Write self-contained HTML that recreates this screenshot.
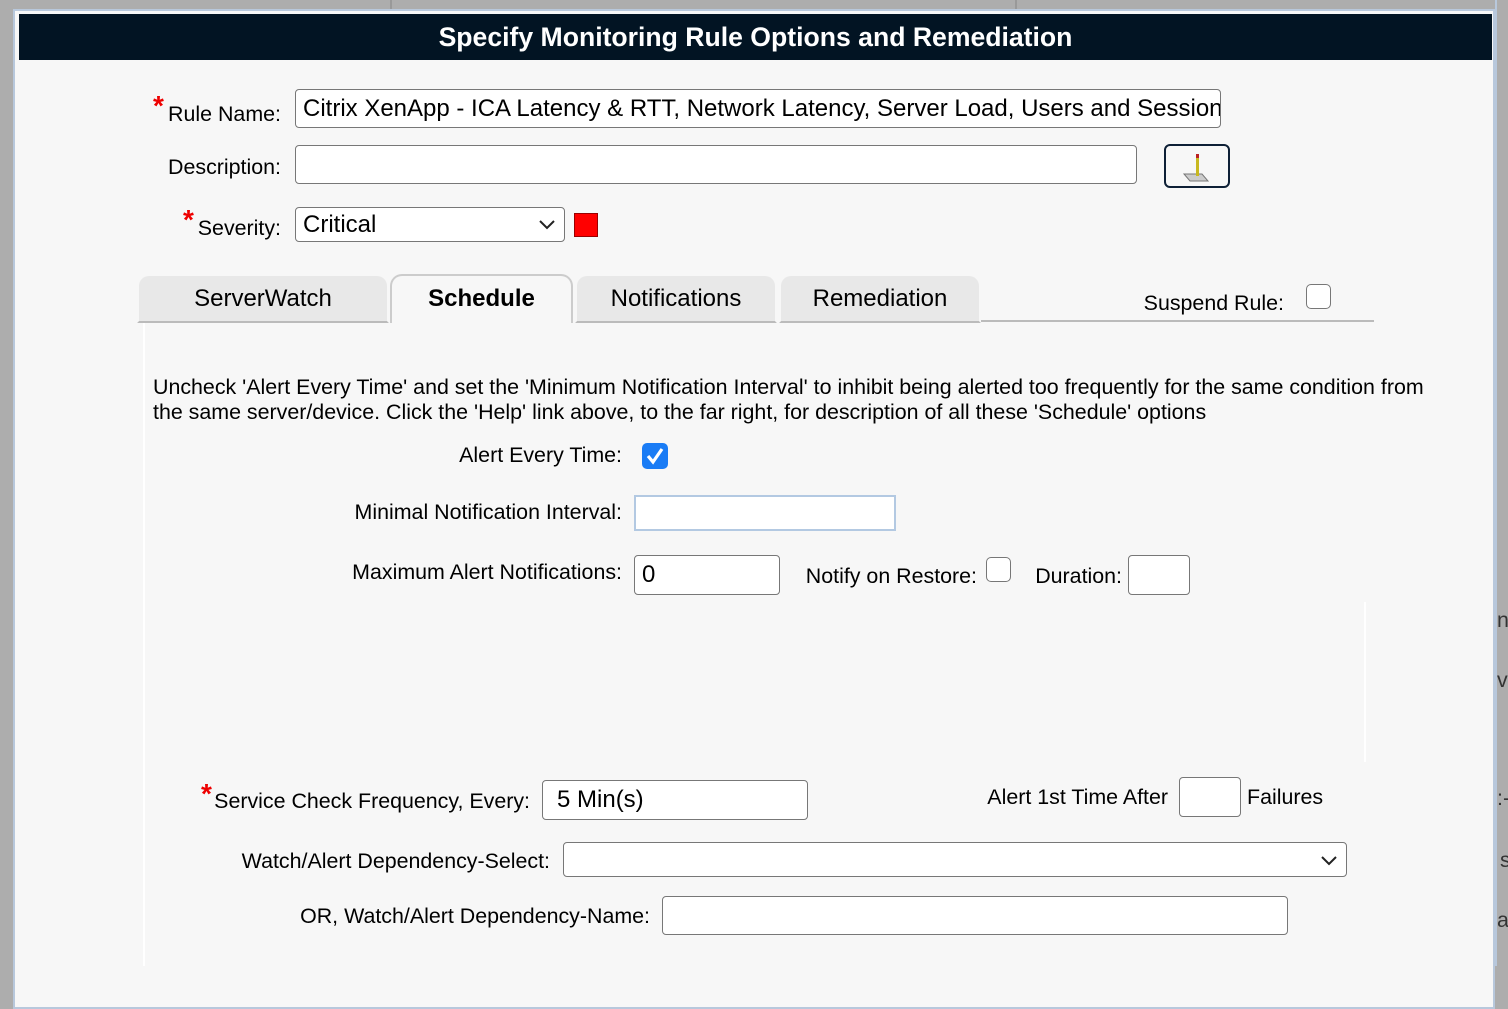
<!DOCTYPE html>
<html><head><meta charset="utf-8"><style>
*{box-sizing:border-box;margin:0;padding:0}
body{width:1508px;height:966px;background:#adadad;font-family:"Liberation Sans",Arial,sans-serif;color:#000;position:relative;overflow:hidden}
.a{position:absolute}
#dlg{left:13px;top:9px;width:1482px;height:1000px;background:#f7f7f7;border:2px solid #b8c8dc}
#hdr{left:19px;top:14px;width:1473px;height:46px;background:#021423;color:#fff;font-weight:bold;font-size:26.6px;text-align:center;line-height:46px}
.lbl{font-size:21.4px;white-space:nowrap}
.r{text-align:right}
.req{color:#e00;font-size:28px;font-weight:bold;position:absolute;line-height:1}
.in{background:#fff;border:1.5px solid #777;border-radius:4px;font-size:24px;padding-left:7px;white-space:nowrap;overflow:hidden}
.tab{top:274px;height:49px;background:#e8e8e8;border:2px solid #f7f7f7;border-bottom:2px solid #bbb;border-radius:12px 12px 0 0;font-size:24px;text-align:center;line-height:46px}
.cb{width:25px;height:25px;border:1.5px solid #777;border-radius:5px;background:#fff}
</style></head><body>
<div class="a" style="left:390px;top:0;width:2px;height:9px;background:#999"></div>
<div class="a" style="left:1015px;top:0;width:2px;height:9px;background:#999"></div>
<div id="dlg" class="a"></div>
<div id="hdr" class="a">Specify Monitoring Rule Options and Remediation</div>

<span class="req" style="left:153px;top:92px">*</span>
<div class="a lbl r" style="left:100px;width:181px;top:102px">Rule Name:</div>
<div class="a in" style="left:295px;top:89px;width:926px;height:39px;line-height:37px">Citrix XenApp - ICA Latency &amp; RTT, Network Latency, Server Load, Users and Sessions</div>

<div class="a lbl r" style="left:100px;width:181px;top:155px">Description:</div>
<div class="a in" style="left:295px;top:145px;width:842px;height:39px"></div>
<div class="a" style="left:1164px;top:144px;width:66px;height:44px;border:2px solid #0e2036;border-radius:6px;background:#f7f7f7">
<svg width="62" height="40" viewBox="0 0 62 40"><polygon points="18,28 36,28 42,35 24,35" fill="#ccc" stroke="#777"/><rect x="30" y="8" width="3" height="22" fill="#c8b820"/><rect x="30" y="8" width="3" height="4" fill="#b22"/></svg></div>

<span class="req" style="left:183px;top:206px">*</span>
<div class="a lbl r" style="left:100px;width:181px;top:216px">Severity:</div>
<div class="a in" style="left:295px;top:207px;width:270px;height:35px;line-height:33px">Critical
<svg class="a" style="right:8px;top:9px" width="18" height="14"><path d="M2 4 L9 11 L16 4" fill="none" stroke="#222" stroke-width="2"/></svg></div>
<div class="a" style="left:574px;top:213px;width:24px;height:24px;background:#f00;border:1.5px solid #900"></div>

<div class="a tab" style="left:137px;width:252px">ServerWatch</div>
<div class="a tab" style="left:390px;width:183px;background:#f7f7f7;border:2px solid #ccc;border-bottom:none;font-weight:bold">Schedule</div>
<div class="a tab" style="left:575px;width:202px">Notifications</div>
<div class="a tab" style="left:779px;width:202px">Remediation</div>
<div class="a" style="left:981px;top:320px;width:393px;height:2px;background:#bbb"></div>
<div class="a lbl r" style="left:1100px;width:184px;top:291px">Suspend Rule:</div>
<div class="a cb" style="left:1306px;top:284px"></div>
<div class="a" style="left:143px;top:323px;width:2px;height:643px;background:#fff"></div>
<div class="a" style="left:1364px;top:602px;width:2px;height:160px;background:#fff"></div>

<div class="a lbl" style="left:153px;top:375px;line-height:25px">Uncheck 'Alert Every Time' and set the 'Minimum Notification Interval' to inhibit being alerted too frequently for the same condition from<br>the same server/device. Click the 'Help' link above, to the far right, for description of all these 'Schedule' options</div>

<div class="a lbl r" style="left:300px;width:322px;top:443px">Alert Every Time:</div>
<div class="a" style="left:642px;top:443px;width:26px;height:26px;background:#1a7cf5;border-radius:5px"><svg width="26" height="26"><path d="M6 13 L11 19 L20 6" fill="none" stroke="#fff" stroke-width="3.2"/></svg></div>

<div class="a lbl r" style="left:300px;width:322px;top:500px">Minimal Notification Interval:</div>
<div class="a" style="left:634px;top:495px;width:262px;height:36px;background:#fff;border:2px solid #b3c9e2"></div>

<div class="a lbl r" style="left:300px;width:322px;top:560px">Maximum Alert Notifications:</div>
<div class="a in" style="left:634px;top:555px;width:146px;height:40px;line-height:38px">0</div>
<div class="a lbl r" style="left:760px;width:217px;top:564px">Notify on Restore:</div>
<div class="a cb" style="left:986px;top:557px"></div>
<div class="a lbl r" style="left:1000px;width:122px;top:564px">Duration:</div>
<div class="a in" style="left:1128px;top:555px;width:62px;height:40px"></div>

<span class="req" style="left:201px;top:780px">*</span>
<div class="a lbl r" style="left:150px;width:380px;top:789px">Service Check Frequency, Every:</div>
<div class="a in" style="left:542px;top:780px;width:266px;height:40px;line-height:38px;padding-left:14px">5 Min(s)</div>
<div class="a lbl r" style="left:900px;width:268px;top:785px">Alert 1st Time After</div>
<div class="a in" style="left:1179px;top:777px;width:62px;height:40px"></div>
<div class="a lbl" style="left:1247px;top:785px">Failures</div>

<div class="a lbl r" style="left:150px;width:400px;top:849px">Watch/Alert Dependency-Select:</div>
<div class="a in" style="left:563px;top:842px;width:784px;height:35px"><svg class="a" style="right:8px;top:10px" width="18" height="14"><path d="M2 4 L9 11 L16 4" fill="none" stroke="#222" stroke-width="2"/></svg></div>

<div class="a lbl r" style="left:150px;width:500px;top:904px">OR, Watch/Alert Dependency-Name:</div>
<div class="a in" style="left:662px;top:896px;width:626px;height:39px"></div>

<div class="a" style="left:1495px;top:0;width:2px;height:966px;background:#b8c8dc"></div>
<div class="a lbl" style="left:1497px;top:608px;color:#333">n</div>
<div class="a lbl" style="left:1497px;top:668px;color:#333">v</div>
<div class="a lbl" style="left:1497px;top:786px;color:#333">:-</div>
<div class="a lbl" style="left:1500px;top:848px;color:#333">s</div>
<div class="a lbl" style="left:1497px;top:908px;color:#333">a</div>
</body></html>
